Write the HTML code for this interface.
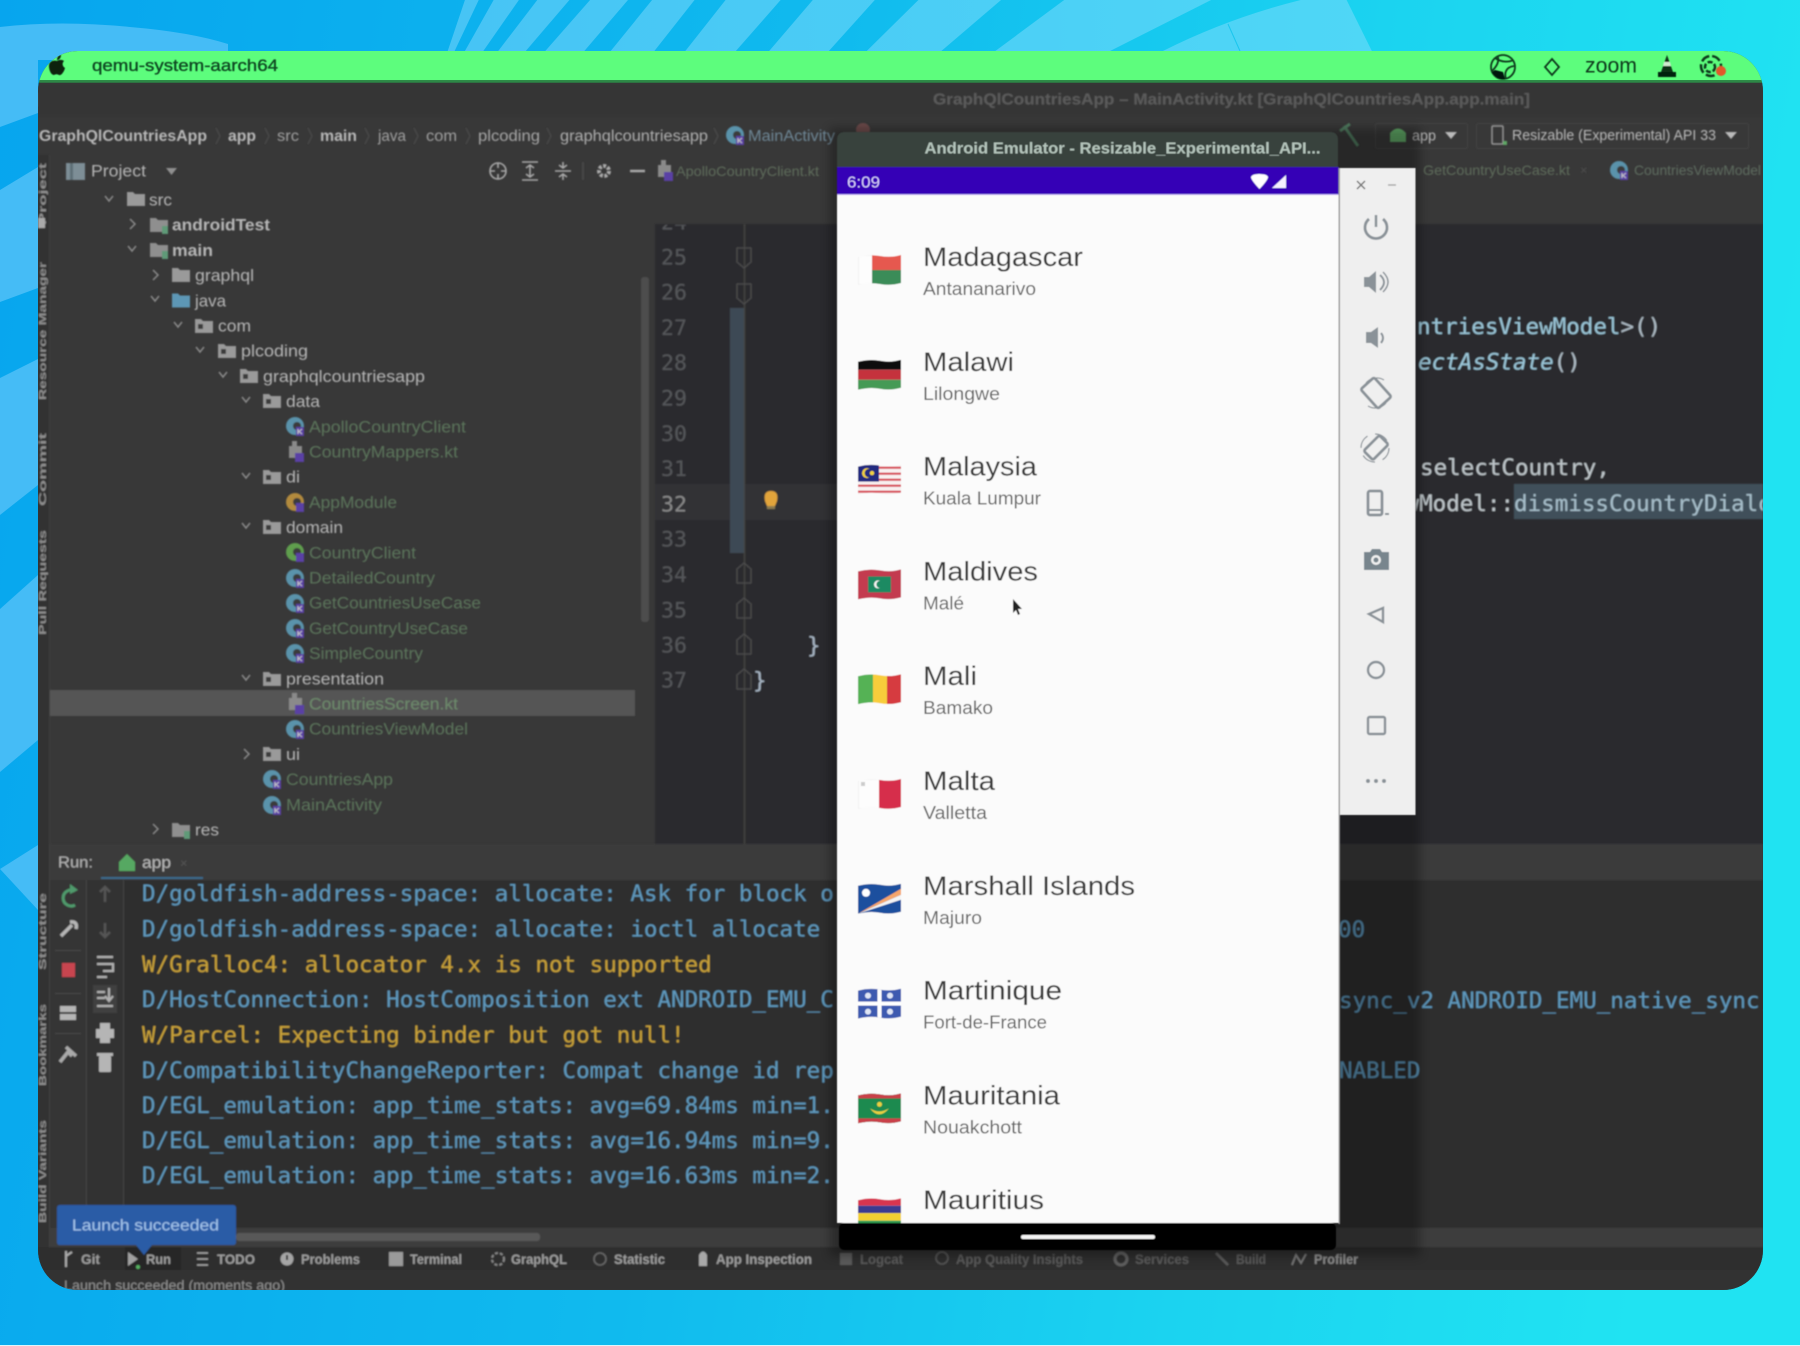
<!DOCTYPE html>
<html lang="en">
<head>
<meta charset="utf-8">
<title>Android Emulator in Android Studio</title>
<style>
html,body{margin:0;padding:0;width:1800px;height:1346px;overflow:hidden;background:#12c4ef}
svg{display:block}
text{font-family:"Liberation Sans",sans-serif;dominant-baseline:central;translate:0 .8px}
.m text,text.m{font-family:"DejaVu Sans Mono","Liberation Mono",monospace}
.a text,.nt text,text.nt{translate:none}
</style>
</head>
<body>
<svg xmlns="http://www.w3.org/2000/svg" width="1800" height="1346" viewBox="0 0 1800 1346">
<defs>
<linearGradient id="bg" x1="0" y1="0" x2="1800" y2="300" gradientUnits="userSpaceOnUse">
<stop offset="0" stop-color="#07a5ee"/><stop offset=".45" stop-color="#10baee"/><stop offset=".75" stop-color="#1bd3f0"/><stop offset="1" stop-color="#20e3f2"/>
</linearGradient>
<linearGradient id="st" x1="400" y1="0" x2="1400" y2="0" gradientUnits="userSpaceOnUse">
<stop offset="0" stop-color="#47c4f5"/><stop offset="1" stop-color="#51dcf6"/>
</linearGradient>
<clipPath id="win"><rect x="38" y="51" width="1725" height="1239" rx="40" ry="40"/></clipPath>
<clipPath id="app"><rect x="837" y="195" width="502" height="1028"/></clipPath>
<clipPath id="cod"><rect x="1416" y="224" width="347" height="620"/></clipPath>
<clipPath id="gut"><rect x="655" y="224" width="100" height="40"/></clipPath>
<clipPath id="fl"><path d="M0,2 Q11,-1 22,1 T43,0 V28 Q32,31 22,29 T0,30 Z"/></clipPath>
<filter id="b" x="-5%" y="-5%" width="110%" height="110%"><feGaussianBlur stdDeviation="0.85"/></filter>
<filter id="b2" x="-5%" y="-5%" width="110%" height="110%"><feGaussianBlur stdDeviation="0.6"/></filter>
<filter id="sh" x="-10%" y="-10%" width="120%" height="120%"><feGaussianBlur stdDeviation="5"/></filter>
<g id="f"><path d="M0,-7 H6 L8,-5 H18 V7 H0 Z" fill="#9a9a9a"/></g>
<g id="fp"><path d="M0,-7 H6 L8,-5 H18 V7 H0 Z" fill="#9a9a9a"/><rect x="3" y="-2" width="5" height="5" fill="#3a3a3a"/></g>
<g id="fs"><path d="M0,-7 H6 L8,-5 H18 V7 H0 Z" fill="#8f8f8f"/><rect x="12" y="1" width="6" height="8" fill="#5f9a78"/></g>
<path id="co" d="M-4,-3 L0,2 L4,-3" fill="none" stroke="#8b8b8b" stroke-width="1.5"/>
<path id="cc" d="M-2,-5 L3,0 L-2,5" fill="none" stroke="#8b8b8b" stroke-width="1.5"/>
<g id="k"><circle cx="9" cy="0" r="9" fill="#5a93ab"/><circle cx="11" cy="0" r="4" fill="#3a3a3a"/><rect x="10" y="1" width="8" height="9" fill="#5a3fa5"/><path d="M12,3 V8 M16,3 L13,5.5 L16,8" stroke="#ccc" stroke-width="1" fill="none"/></g>
<g id="kg"><circle cx="9" cy="0" r="9" fill="#5f9e4e"/><circle cx="11" cy="0" r="4" fill="#3a3a3a"/><rect x="10" y="1" width="8" height="9" fill="#5a3fa5"/></g>
<g id="ko"><circle cx="9" cy="0" r="9" fill="#b28a3e"/><circle cx="11" cy="0" r="4" fill="#3a3a3a"/><rect x="10" y="1" width="8" height="9" fill="#5a3fa5"/></g>
<g id="kf"><rect x="3" y="-6" width="13" height="12" fill="#8a8a8a"/><rect x="6" y="-11" width="5" height="6" fill="#8a8a8a"/><rect x="9" y="1" width="9" height="9" fill="#5a3fa5"/></g>
</defs>

<!-- background -->
<rect width="1800" height="1346" fill="url(#bg)"/>
<g fill="url(#st)">
<g transform="scale(1.148 1)">
<polygon points="405,0 417,0 396,51 390,51"/>
<polygon points="430,0 452,0 421,51 405,51"/>
<polygon points="468,0 496,0 458,51 434,51"/>
<polygon points="514,0 547,0 509,51 475,51"/>
<polygon points="568,0 605,0 570,51 532,51"/>
<polygon points="632,0 680,0 641,51 597,51"/>
<polygon points="708,0 762,0 722,51 670,51"/>
<polygon points="800,0 872,0 820,51 755,51"/>
<polygon points="927,0 1055,0 967,51 867,51"/>
<path d="M1133,0 H1173 L1195,51 H1013 Q1070,18 1133,0 Z"/>
</g>
</g>
<path d="M1228,24 L1240,51" stroke="#1ac6ee" stroke-width="1" fill="none"/>
<g fill="#45bcf6">
<path d="M0,27 Q60,20 130,27 Q190,32 228,44 V60 H38 V113 L0,127 Z"/>
<polygon points="0,190 38,167 38,288 0,302"/>
<polygon points="0,378 38,359 38,485 0,515"/>
<polygon points="0,609 38,575 38,740 0,772"/>
<polygon points="0,869 38,845 38,910"/>
</g>
<rect y="1345" width="1800" height="1" fill="#dff6fb"/>

<!-- window -->
<g clip-path="url(#win)">
<rect x="38" y="51" width="1725" height="1239" fill="#383838"/>
<rect x="38" y="51" width="1725" height="31" fill="#5dfd7d"/>
<rect x="38" y="80" width="1725" height="3" fill="#2e8a48"/>

<g filter="url(#b2)">
<!-- menubar -->
<path d="M57,61 C60,59 63,60 64,61 C62,63 62,66 65,68 C64,72 61,76 59,75 C57,74 56,74 54,75 C51,75 49,70 49,66 C49,61 54,60 57,61 Z M57,60 C57,57 59,55 61,55 C61,58 59,60 57,60 Z" fill="#07200f"/>
<text x="92" y="65" font-size="16.5" fill="#0c4a22" stroke="#0c4a22" stroke-width=".35" textLength="186" lengthAdjust="spacingAndGlyphs">qemu-system-aarch64</text>
<g fill="none" stroke="#0b3a1c" stroke-width="1.8">
<circle cx="1503" cy="67" r="12"/>
<path d="M1495,58 C1502,63 1510,62 1513,60 M1492,71 C1497,66 1499,62 1498,57 M1506,79 C1504,73 1506,67 1514,66"/>
<path d="M1552,59 L1559,67 L1552,75 L1545,67 Z"/>
</g>
<path d="M1495,70 L1503,72 L1505,79 C1499,80 1494,76 1492,72 Z" fill="#04170a"/>
<path d="M1552,62 L1556,67 L1552,72 L1548,67 Z" fill="#5dfd7d"/>
<text x="1585" y="65" font-size="21" fill="#0b3a1c" textLength="52" lengthAdjust="spacingAndGlyphs">zoom</text>
<path d="M1667,55 L1673,72 H1661 Z" fill="#0a3018"/><path d="M1664,62 H1670 L1671,66 H1663 Z" fill="#cfe9cf"/><rect x="1658" y="72" width="18" height="5" fill="#062010"/>
<circle cx="1711" cy="66" r="10" fill="none" stroke="#0b3a1c" stroke-width="2.5" stroke-dasharray="9 3"/>
<circle cx="1710" cy="67" r="5" fill="none" stroke="#0b3a1c" stroke-width="2.5" stroke-dasharray="5 2"/>
<circle cx="1721" cy="71" r="5" fill="#e2592b"/>

<!-- IDE title -->
<circle cx="40" cy="100" r="7" fill="#4c4c4c"/><circle cx="66" cy="100" r="7" fill="#4c4c4c"/><circle cx="92" cy="100" r="7" fill="#4c4c4c"/>
</g>

<g filter="url(#b)">
<rect x="38" y="83" width="1725" height="33" fill="#363636"/>
<text class="nt" x="933" y="100" font-size="16" font-weight="bold" fill="#5c5c5c" textLength="597" lengthAdjust="spacingAndGlyphs">GraphQlCountriesApp – MainActivity.kt [GraphQlCountriesApp.app.main]</text>

<!-- breadcrumbs -->
<g font-size="15.5" fill="#b9b9b9">
<text x="39" y="135.5" font-weight="bold" textLength="168" lengthAdjust="spacingAndGlyphs">GraphQlCountriesApp</text>
<text x="228" y="135.5" font-weight="bold" textLength="28" lengthAdjust="spacingAndGlyphs">app</text>
<text x="277" y="135.5" fill="#a0a0a0" textLength="22" lengthAdjust="spacingAndGlyphs">src</text>
<text x="320" y="135.5" font-weight="bold" textLength="37" lengthAdjust="spacingAndGlyphs">main</text>
<text x="378" y="135.5" fill="#a0a0a0" textLength="28" lengthAdjust="spacingAndGlyphs">java</text>
<text x="426" y="135.5" fill="#a0a0a0" textLength="31" lengthAdjust="spacingAndGlyphs">com</text>
<text x="478" y="135.5" fill="#a8a8a8" textLength="62" lengthAdjust="spacingAndGlyphs">plcoding</text>
<text x="560" y="135.5" fill="#b0b0b0" textLength="148" lengthAdjust="spacingAndGlyphs">graphqlcountriesapp</text>
<text x="748" y="135.5" fill="#6e8796" textLength="87" lengthAdjust="spacingAndGlyphs">MainActivity</text>
</g>
<g fill="none" stroke="#4c4c4c" stroke-width="1.2">
<path d="M216,128 L220,136 L216,144 M265,128 L269,136 L265,144 M308,128 L312,136 L308,144 M365,128 L369,136 L365,144 M414,128 L418,136 L414,144 M466,128 L470,136 L466,144 M547,128 L551,136 L547,144 M714,128 L718,136 L714,144"/>
</g>
<use href="#k" x="726" y="135"/>
<circle cx="863" cy="130" r="7" fill="#6b4a4a"/>
<!-- run config -->
<path d="M1344,126 L1358,146 M1340,131 L1350,124" stroke="#4f7a5f" stroke-width="3" fill="none"/>
<rect x="1375.5" y="123.5" width="92" height="25" fill="none" stroke="#444" rx="2"/>
<rect x="1476.5" y="123.5" width="272" height="25" fill="none" stroke="#444" rx="2"/>
<path d="M1390,142 V133 Q1398,124 1406,133 V142 Z" fill="#5fa765"/>
<text x="1412" y="135" font-size="15" fill="#bbb" textLength="24" lengthAdjust="spacingAndGlyphs">app</text>
<path d="M1445,132 H1457 L1451,139 Z" fill="#bbb"/>
<rect x="1492" y="126" width="11" height="18" fill="none" stroke="#999" stroke-width="1.5" rx="1"/>
<rect x="1503" y="141" width="4" height="4" fill="#5fa765"/>
<text x="1512" y="135" font-size="14.5" fill="#bbb" textLength="204" lengthAdjust="spacingAndGlyphs">Resizable (Experimental) API 33</text>
<path d="M1725,132 H1737 L1731,139 Z" fill="#bbb"/>

<!-- project toolbar -->
<rect x="66" y="163" width="19" height="17" fill="#7d8e96"/>
<rect x="70" y="163" width="3" height="17" fill="#5d6e76"/>
<text class="nt" x="91" y="171.5" font-size="16.5" fill="#b8b8b8" textLength="55" lengthAdjust="spacingAndGlyphs">Project</text>
<path d="M166,168 H177 L171.5,175 Z" fill="#909090"/>
<g fill="none" stroke="#aaa" stroke-width="1.6">
<circle cx="498" cy="171" r="8"/><path d="M498,163 V168 M498,174 V179 M490,171 H495 M501,171 H506"/>
<path d="M522,162 H538 M522,180 H538 M530,165 V177 M526,168 L530,165 L534,168 M526,174 L530,177 L534,174"/>
<path d="M555,171 H571 M563,162 V168 M563,174 V180 M559,165 L563,168 L567,165 M559,177 L563,174 L567,177"/>
<path d="M583,162 V180" stroke="#4a4a4a"/>
<circle cx="604" cy="171" r="5" stroke-width="4" stroke-dasharray="3 1.5"/>
<path d="M630,171 H645" stroke-width="2.5"/>
</g>
<use href="#kf" x="655" y="171"/>
<g class="nt">
<text x="676" y="171" font-size="14" fill="#5f6d5c" textLength="143" lengthAdjust="spacingAndGlyphs">ApolloCountryClient.kt</text>
<text x="1423" y="170" font-size="14" fill="#5f6d5c" textLength="147" lengthAdjust="spacingAndGlyphs">GetCountryUseCase.kt</text>
<text x="1580" y="170" font-size="13" fill="#4e4e4e">×</text>
<text x="1634" y="170" font-size="14" fill="#5f6d60" textLength="127" lengthAdjust="spacingAndGlyphs">CountriesViewModel</text>
</g>
<use href="#k" x="1610" y="170"/>

<!-- left tool strip -->
<rect x="38" y="155" width="11" height="1135" fill="#333"/>
<rect x="49" y="155" width="1" height="1105" fill="#414141"/>
<g font-size="10.5" fill="#8e8e8e" font-weight="bold" class="nt">
<text transform="translate(43,225) rotate(-90)" textLength="62" lengthAdjust="spacingAndGlyphs">Project</text>
<text transform="translate(43,400) rotate(-90)" textLength="138" lengthAdjust="spacingAndGlyphs">Resource Manager</text>
<text transform="translate(43,506) rotate(-90)" textLength="73" lengthAdjust="spacingAndGlyphs">Commit</text>
<text transform="translate(43,635) rotate(-90)" textLength="105" lengthAdjust="spacingAndGlyphs">Pull Requests</text>
<text transform="translate(43,970) rotate(-90)" textLength="77" lengthAdjust="spacingAndGlyphs">Structure</text>
<text transform="translate(43,1086) rotate(-90)" textLength="82" lengthAdjust="spacingAndGlyphs">Bookmarks</text>
<text transform="translate(43,1223) rotate(-90)" textLength="103" lengthAdjust="spacingAndGlyphs">Build Variants</text>
</g>
<rect x="38" y="218" width="7" height="10" fill="#aaa"/>

<!-- project tree -->
<rect x="50" y="690" width="585" height="26" fill="#555"/>
<rect x="641" y="277" width="8" height="345" fill="#4d4d4d" rx="3"/>

<use href="#co" x="109" y="199"/><use href="#f" x="127" y="199"/>
<use href="#cc" x="132" y="224"/><use href="#fs" x="150" y="225"/>
<use href="#co" x="132" y="249"/><use href="#fs" x="150" y="250"/>
<use href="#cc" x="155" y="275"/><use href="#f" x="172" y="275"/>
<use href="#co" x="155" y="299"/><path d="M172,293.5 H178 L180,295.5 H190 V307.5 H172 Z" fill="#5d97b5"/>
<use href="#co" x="178" y="325"/><use href="#fp" x="195" y="326"/>
<use href="#co" x="200" y="350"/><use href="#fp" x="218" y="351"/>
<use href="#co" x="223" y="375"/><use href="#fp" x="240" y="376"/>
<use href="#co" x="246" y="400"/><use href="#fp" x="263" y="401"/>
<use href="#k" x="286" y="426"/>
<use href="#kf" x="286" y="452"/>
<use href="#co" x="246" y="476"/><use href="#fp" x="263" y="477"/>
<use href="#ko" x="286" y="502"/>
<use href="#co" x="246" y="526"/><use href="#fp" x="263" y="527"/>
<use href="#kg" x="286" y="552"/>
<use href="#k" x="286" y="578"/><use href="#k" x="286" y="603"/><use href="#k" x="286" y="628"/><use href="#k" x="286" y="653"/>
<use href="#co" x="246" y="678"/><use href="#fp" x="263" y="679"/>
<use href="#kf" x="286" y="704"/>
<use href="#k" x="286" y="729"/>
<use href="#cc" x="246" y="754"/><use href="#fp" x="263" y="754"/>
<use href="#k" x="263" y="779"/><use href="#k" x="263" y="805"/>
<use href="#cc" x="155" y="829"/><use href="#fs" x="172" y="830"/>

<g font-size="16.5" fill="#b8b8b8">
<text x="149" y="199.7" textLength="23" lengthAdjust="spacingAndGlyphs">src</text>
<text x="172" y="224.9" font-weight="bold" textLength="98" lengthAdjust="spacingAndGlyphs">androidTest</text>
<text x="172" y="250.1" font-weight="bold" textLength="41" lengthAdjust="spacingAndGlyphs">main</text>
<text x="195" y="275.3" textLength="59" lengthAdjust="spacingAndGlyphs">graphql</text>
<text x="195" y="300.5" textLength="31" lengthAdjust="spacingAndGlyphs">java</text>
<text x="218" y="325.7" textLength="33" lengthAdjust="spacingAndGlyphs">com</text>
<text x="241" y="350.9" textLength="67" lengthAdjust="spacingAndGlyphs">plcoding</text>
<text x="263" y="376.1" textLength="162" lengthAdjust="spacingAndGlyphs">graphqlcountriesapp</text>
<text x="286" y="401.3" textLength="34" lengthAdjust="spacingAndGlyphs">data</text>
<text x="286" y="476.9" textLength="14" lengthAdjust="spacingAndGlyphs">di</text>
<text x="286" y="527.3" textLength="57" lengthAdjust="spacingAndGlyphs">domain</text>
<text x="286" y="678.5" textLength="98" lengthAdjust="spacingAndGlyphs">presentation</text>
<text x="286" y="754.1" textLength="14" lengthAdjust="spacingAndGlyphs">ui</text>
<text x="195" y="829.7" textLength="24" lengthAdjust="spacingAndGlyphs">res</text>
</g>
<g font-size="16.5" fill="#5c765b">
<text x="309" y="426.5" textLength="157" lengthAdjust="spacingAndGlyphs">ApolloCountryClient</text>
<text x="309" y="451.7" textLength="149" lengthAdjust="spacingAndGlyphs">CountryMappers.kt</text>
<text x="309" y="502.1" textLength="88" lengthAdjust="spacingAndGlyphs">AppModule</text>
<text x="309" y="552.5" textLength="107" lengthAdjust="spacingAndGlyphs">CountryClient</text>
<text x="309" y="577.7" textLength="126" lengthAdjust="spacingAndGlyphs">DetailedCountry</text>
<text x="309" y="602.9" textLength="172" lengthAdjust="spacingAndGlyphs">GetCountriesUseCase</text>
<text x="309" y="628.1" textLength="159" lengthAdjust="spacingAndGlyphs">GetCountryUseCase</text>
<text x="309" y="653.3" textLength="114" lengthAdjust="spacingAndGlyphs">SimpleCountry</text>
<text x="309" y="703.7" textLength="149" lengthAdjust="spacingAndGlyphs" fill="#6d8a6c">CountriesScreen.kt</text>
<text x="309" y="728.9" textLength="159" lengthAdjust="spacingAndGlyphs">CountriesViewModel</text>
<text x="286" y="779.3" textLength="107" lengthAdjust="spacingAndGlyphs">CountriesApp</text>
<text x="286" y="804.5" textLength="96" lengthAdjust="spacingAndGlyphs">MainActivity</text>
</g>

<!-- editor -->
<rect x="655" y="224" width="1108" height="620" fill="#2b2b2e"/>
<rect x="655" y="484" width="200" height="36" fill="#303236"/>
<rect x="730" y="308" width="15" height="245" fill="#3e4a54"/>
<path d="M744.5,224 V844" stroke="#454545" stroke-width="1.2"/>
<g fill="none" stroke="#4c4c4c" stroke-width="1.3">
<path d="M737,248 H751 V262 L744,268 L737,262 Z"/><path d="M737,284 H751 V298 L744,304 L737,298 Z"/>
<path d="M744,563 L751,569 V583 H737 V569 Z"/><path d="M744,598 L751,604 V618 H737 V604 Z"/>
<path d="M744,634 L751,640 V654 H737 V640 Z"/><path d="M744,669 L751,675 V689 H737 V675 Z"/>
</g>
<g class="m" font-size="21.5" fill="#55575a">
<text x="661" y="222" clip-path="url(#gut)">24</text>
<text x="661" y="257">25</text><text x="661" y="292.3">26</text><text x="661" y="327.6">27</text><text x="661" y="362.9">28</text><text x="661" y="398.2">29</text><text x="661" y="433.5">30</text><text x="661" y="468.8">31</text>
<text x="661" y="504.1" fill="#8a8a8a">32</text>
<text x="661" y="539.4">33</text><text x="661" y="574.7">34</text><text x="661" y="610">35</text><text x="661" y="645.3">36</text><text x="661" y="680">37</text>
</g>
<path d="M771,491 Q779,491 777,501 L775,506 H767 L765,501 Q763,491 771,491 Z" fill="#e2a43a"/>
<rect x="767" y="506" width="8" height="3" fill="#8a7a50"/>
<g class="m" font-size="22.54" fill="#a9b7c6">
<text x="807" y="645">}</text><text x="753" y="680">}</text>
<g clip-path="url(#cod)">
<rect x="1514" y="484" width="249" height="35" fill="#41505a"/>
<text x="1417" y="326"><tspan fill="#9cc8da">ntriesViewModel</tspan><tspan fill="#b0bec8">&gt;()</tspan></text>
<text x="1418" y="361.5" font-style="italic" fill="#9cc8da">ectAsState<tspan font-style="normal" fill="#b0bec8">()</tspan></text>
<text x="1420" y="467" fill="#c0c8cc">selectCountry,</text>
<text x="1405.5" y="503" fill="#c0c8cc">wModel::<tspan fill="#a8c0cc">dismissCountryDialog</tspan></text>
</g>
</g>

<!-- run panel -->
<rect x="50" y="844" width="1713" height="36" fill="#3a3a3a"/>
<g class="nt">
<text x="58" y="863" font-size="16" fill="#b5b5b5" textLength="35" lengthAdjust="spacingAndGlyphs">Run:</text>
<text x="142" y="863" font-size="16.5" fill="#bbb" textLength="29" lengthAdjust="spacingAndGlyphs">app</text>
<text x="180" y="863" font-size="13" fill="#555">×</text>
</g>
<path d="M119,871 V862 L127,854 L135,862 V871 Z" fill="#56a862"/>
<rect x="101" y="877" width="102" height="2" fill="#3a6a8c"/>
<rect x="50" y="880" width="1713" height="348" fill="#2d2d2e"/>
<rect x="50" y="880" width="36" height="348" fill="#343434"/>
<rect x="86" y="880" width="1" height="348" fill="#444"/>
<rect x="87" y="880" width="36" height="348" fill="#333"/>
<rect x="123" y="880" width="1" height="348" fill="#444"/>
<g class="m" font-size="22.54" fill="#5f99bd">
<text x="142" y="893">D/goldfish-address-space: allocate: Ask for block o</text>
<text x="142" y="928.5">D/goldfish-address-space: allocate: ioctl allocate</text>
<text x="142" y="964" fill="#c9a238">W/Gralloc4: allocator 4.x is not supported</text>
<text x="142" y="999">D/HostConnection: HostComposition ext ANDROID_EMU_C</text>
<text x="142" y="1034.5" fill="#c9a238">W/Parcel: Expecting binder but got null!</text>
<text x="142" y="1070">D/CompatibilityChangeReporter: Compat change id rep</text>
<text x="142" y="1105">D/EGL_emulation: app_time_stats: avg=69.84ms min=1.</text>
<text x="142" y="1140">D/EGL_emulation: app_time_stats: avg=16.94ms min=9.</text>
<text x="142" y="1175">D/EGL_emulation: app_time_stats: avg=16.63ms min=2.</text>
<text x="1338" y="929">00</text>
<text x="1339" y="1000">sync_v2 ANDROID_EMU_native_sync,</text>
<text x="1339" y="1070">NABLED</text>
</g>
<!-- run toolbar icons -->
<path d="M75,891 A8,8 0 1 0 75,905" fill="none" stroke="#4f9a6c" stroke-width="3"/><path d="M70,884 L78,890 L70,894 Z" fill="#4f9a6c"/>
<path d="M61,936 L72,925 M70,922 Q78,921 76,929" stroke="#b5b5b5" stroke-width="3.5" fill="none"/>
<rect x="62" y="963" width="13" height="14" fill="#c8444f"/>
<rect x="55" y="950" width="26" height="1" fill="#4a4a4a"/><rect x="55" y="993" width="26" height="1" fill="#4a4a4a"/><rect x="55" y="1033" width="26" height="1" fill="#4a4a4a"/>
<rect x="60" y="1006" width="16" height="6" fill="#b5b5b5"/><rect x="60" y="1014" width="16" height="6" fill="#b5b5b5"/>
<path d="M60,1062 L68,1052 L72,1056 M66,1047 L76,1056" stroke="#aaa" stroke-width="3.5" fill="none"/>
<path d="M105,888 V902 M100,892 L105,887 L110,892" stroke="#555" stroke-width="2.5" fill="none"/>
<path d="M105,923 V936 M100,932 L105,937 L110,932" stroke="#555" stroke-width="2.5" fill="none"/>
<path d="M97,957 H113 M97,964 H113 V971 H103 M97,977 H107" stroke="#b0b0b0" stroke-width="2.2" fill="none"/>
<rect x="93" y="985" width="24" height="28" fill="#3f3f3f"/>
<path d="M97,992 H105 M97,998 H105 M97,1006 H113 M109,988 V1000 M105,996 L109,1001 L113,996" stroke="#b0b0b0" stroke-width="2.2" fill="none"/>
<rect x="100" y="1023" width="10" height="6" fill="#b5b5b5"/><rect x="96" y="1029" width="18" height="9" fill="#b5b5b5"/><rect x="100" y="1038" width="10" height="5" fill="#b5b5b5"/>
<rect x="99" y="1056" width="12" height="16" fill="#b5b5b5" rx="1"/><rect x="97" y="1053" width="16" height="3" fill="#b5b5b5"/>

<!-- horizontal scrollbar + bottom bars -->
<rect x="50" y="1228" width="1713" height="19" fill="#3d3d3d"/>
<rect x="236" y="1233" width="304" height="8" fill="#585858" rx="3"/>
<rect x="38" y="1247" width="1725" height="23" fill="#2f2f2f"/>
<rect x="38" y="1270" width="1725" height="20" fill="#333"/>
<rect x="125" y="1247" width="56" height="23" fill="#272727"/>
<g font-size="14" fill="#9e9e9e" class="nt">
<text x="81" y="1259" textLength="19" lengthAdjust="spacingAndGlyphs" font-weight="bold">Git</text>
<text x="146" y="1259" textLength="25" lengthAdjust="spacingAndGlyphs" font-weight="bold">Run</text>
<text x="217" y="1259" textLength="38" lengthAdjust="spacingAndGlyphs" font-weight="bold">TODO</text>
<text x="301" y="1259" textLength="59" lengthAdjust="spacingAndGlyphs" font-weight="bold">Problems</text>
<text x="410" y="1259" textLength="52" lengthAdjust="spacingAndGlyphs" font-weight="bold">Terminal</text>
<text x="511" y="1259" textLength="56" lengthAdjust="spacingAndGlyphs" font-weight="bold">GraphQL</text>
<text x="614" y="1259" textLength="51" lengthAdjust="spacingAndGlyphs" font-weight="bold">Statistic</text>
<text x="716" y="1259" textLength="96" lengthAdjust="spacingAndGlyphs" font-weight="bold">App Inspection</text>
<g fill="#5a5a5a" font-weight="bold">
<text x="860" y="1259" textLength="43" lengthAdjust="spacingAndGlyphs">Logcat</text>
<text x="956" y="1259" textLength="127" lengthAdjust="spacingAndGlyphs">App Quality Insights</text>
<text x="1135" y="1259" textLength="54" lengthAdjust="spacingAndGlyphs">Services</text>
<text x="1236" y="1259" textLength="30" lengthAdjust="spacingAndGlyphs">Build</text>
</g>
<text x="1314" y="1259" textLength="44" lengthAdjust="spacingAndGlyphs" fill="#8e8e8e" font-weight="bold">Profiler</text>
<text x="64" y="1285" font-size="14" fill="#8f8f8f" textLength="221" lengthAdjust="spacingAndGlyphs">Launch succeeded (moments ago)</text>
</g>
<path d="M66,1251 V1267 M66,1256 L72,1252" stroke="#aaa" stroke-width="2" fill="none"/>
<path d="M128,1252 L138,1259 L128,1266 Z" fill="#a0a0a0"/><circle cx="138" cy="1267" r="2" fill="#55b060"/>
<path d="M197,1253 H208 M197,1259 H208 M197,1265 H208" stroke="#aaa" stroke-width="1.6"/>
<circle cx="287" cy="1259" r="6.5" fill="#a5a5a5"/><rect x="286" y="1255" width="2" height="5" fill="#333"/>
<rect x="389" y="1252" width="14" height="14" fill="#9a9a9a"/>
<circle cx="498" cy="1259" r="6" fill="none" stroke="#888" stroke-width="2" stroke-dasharray="3 2"/>
<circle cx="600" cy="1259" r="6" fill="none" stroke="#666" stroke-width="1.6"/>
<path d="M699,1266 V1255 Q703,1248 707,1255 V1266 Z" fill="#a8a8a8"/>
<rect x="840" y="1253" width="12" height="12" fill="#5a5a5a"/>
<circle cx="942" cy="1258" r="6" fill="none" stroke="#555" stroke-width="1.6"/>
<circle cx="1121" cy="1259" r="6" fill="none" stroke="#5e5e5e" stroke-width="3"/>
<path d="M1216,1253 L1228,1265" stroke="#5a5a5a" stroke-width="2.5"/>
<path d="M1292,1265 L1296,1255 L1301,1263 L1306,1254" fill="none" stroke="#777" stroke-width="1.8"/>

<!-- tooltip -->
<path d="M60,1205 H233 Q236,1205 236,1208 V1242 Q236,1245 233,1245 H152 L144,1255 L136,1245 H60 Q57,1245 57,1242 V1208 Q57,1205 60,1205 Z" fill="#2a5ca6"/>
<text x="72" y="1225" font-size="16" fill="#a6c8ee" textLength="147" lengthAdjust="spacingAndGlyphs">Launch succeeded</text>
</g>

<!-- emulator -->
<rect x="830" y="128" width="590" height="1128" fill="#000" opacity=".3" filter="url(#sh)"/>
<g filter="url(#b2)">
<path d="M837,140 Q837,132 845,132 H1330 Q1338,132 1338,140 V168 H837 Z" fill="#37423d"/>
<text x="924.5" y="148" font-size="15.5" font-weight="bold" fill="#b4c4bb" textLength="396" lengthAdjust="spacingAndGlyphs">Android Emulator - Resizable_Experimental_API...</text>
<rect x="837" y="167" width="502" height="27" fill="#3400b6"/>
<rect x="837" y="194" width="502" height="1.5" fill="#b8a0f0"/>
<text x="847" y="182" font-size="16" fill="#d9cdfa" textLength="33" lengthAdjust="spacingAndGlyphs">6:09</text>
<path d="M1251,177 Q1252,174 1259,174 Q1267,174 1268,177 Q1268,180 1259.5,189 Q1251,180 1251,177 Z" fill="#fff"/>
<path d="M1286,175 V188 H1272 Z" fill="#f4f0ff"/>
<rect x="837" y="195" width="502" height="1028" fill="#fbfbfb"/>
<rect x="1338.5" y="168" width="1.5" height="1056" fill="#9a9a9a"/>
<rect x="839" y="1223" width="497" height="27" fill="#000" rx="5"/>
<rect x="1021" y="1235" width="134" height="4" rx="2" fill="#f4f4f4"/>

<rect x="1340" y="168" width="75.5" height="647" fill="#efefef"/>
<g fill="none" stroke="#8a9298" stroke-width="2.5">
<path d="M1357,181 L1365,189 M1365,181 L1357,189" stroke-width="1.5" stroke="#777"/>
<path d="M1388,185 H1396" stroke-width="1.5" stroke="#aaa"/>
<path d="M1376,215 V227"/><path d="M1369,219 A11,11 0 1 0 1383,219" stroke-width="2.8"/>
<path d="M1364,277 H1369 L1376,271 V293 L1369,287 H1364 Z" fill="#8a9298" stroke="none"/>
<path d="M1380,275 Q1388,282 1380,290" stroke-width="2"/><path d="M1383,272 Q1393,282 1383,292" stroke-width="1.5"/>
<path d="M1366,332 H1371 L1378,327 V348 L1371,343 H1366 Z" fill="#8a9298" stroke="none"/>
<path d="M1381,333 Q1385,338 1381,343" stroke-width="2"/>
<rect x="1367" y="380" width="18" height="26" rx="2" transform="rotate(-42 1376 393)" stroke-width="2.8"/>
<path d="M1366,383 A14,14 0 0 1 1384,380 M1386,403 A14,14 0 0 1 1368,406" stroke-width="1.2"/>
<rect x="1365" y="442" width="22" height="13" rx="2" transform="rotate(-45 1375 448)" stroke-width="2.8"/>
<circle cx="1375" cy="448" r="14" stroke-width="1.2" stroke-dasharray="14 8"/>
<rect x="1368" y="491" width="14" height="24" rx="2" stroke-width="2.8"/>
<path d="M1368,510 H1382" stroke-width="2"/>
<path d="M1385,514 H1389" stroke-width="2"/>
<path d="M1383,608 L1369,614 L1383,622 Z" stroke-width="2.4"/>
<circle cx="1376" cy="670" r="8" stroke-width="2.4"/>
<rect x="1368" y="717" width="17" height="17" rx="1.5" stroke-width="2.4"/>
</g>
<path d="M1364,552 H1370 L1372,549 H1380 L1382,552 H1389 V570 H1364 Z" fill="#78858d"/><circle cx="1376" cy="560" r="5" fill="#efefef"/><circle cx="1376" cy="560" r="2.5" fill="#78858d"/>
<circle cx="1368" cy="781" r="2" fill="#8a9298"/><circle cx="1376" cy="781" r="2" fill="#8a9298"/><circle cx="1384" cy="781" r="2" fill="#8a9298"/>

<g clip-path="url(#app)" class="a">
<!-- Flags -->
<g transform="translate(858,255)"><g clip-path="url(#fl)"><rect width="14" height="30" fill="#f1f1f1"/><rect width="13" height="28" x="1" y="1" fill="#fdfdfd"/><rect x="14" width="29" height="15" fill="#e6584f"/><rect x="14" y="15" width="29" height="15" fill="#3a8c58"/></g></g>
<g transform="translate(858,359.8)"><g clip-path="url(#fl)"><rect width="43" height="10" fill="#111"/><rect y="10" width="43" height="10" fill="#c5303c"/><rect y="20" width="43" height="10" fill="#459a55"/></g></g>
<g transform="translate(858,464.6)"><g clip-path="url(#fl)"><rect width="43" height="30" fill="#f8f0f0"/><g fill="#d8555f"><rect y="2" width="43" height="2.2"/><rect y="8" width="43" height="2.2"/><rect y="14" width="43" height="2.2"/><rect y="20" width="43" height="2.2"/><rect y="26" width="43" height="2.2"/></g><rect width="21" height="17" fill="#232a80"/><circle cx="9" cy="8.5" r="5" fill="#f0d040"/><circle cx="11" cy="8.5" r="4.3" fill="#232a80"/><circle cx="14" cy="8.5" r="2.2" fill="#f0d040"/></g></g>
<g transform="translate(858,569.4)"><g clip-path="url(#fl)"><rect width="43" height="30" fill="#c33a50"/><rect x="10" y="7" width="23" height="16" fill="#1f8a62"/><circle cx="20" cy="15" r="4" fill="#f4f4f4"/><circle cx="22" cy="15" r="3.6" fill="#1f8a62"/></g></g>
<g transform="translate(858,674.2)"><g clip-path="url(#fl)"><rect width="15" height="30" fill="#55b255"/><rect x="15" width="14" height="30" fill="#f8cd3a"/><rect x="29" width="14" height="30" fill="#d63a40"/></g></g>
<g transform="translate(858,779)"><g clip-path="url(#fl)"><rect width="21" height="30" fill="#f1f1f1"/><rect x="1" y="1" width="20" height="28" fill="#fdfdfd"/><rect x="21" width="22" height="30" fill="#d62f4b"/><rect x="3" y="3" width="4" height="4" fill="#ccc"/></g></g>
<g transform="translate(858,883.8)"><g clip-path="url(#fl)"><rect width="43" height="30" fill="#1f509e"/><path d="M0,30 L43,5 V11 Z" fill="#f5a56a"/><path d="M0,30 L43,11 V16 Z" fill="#f4f4f4"/><circle cx="8" cy="9" r="4" fill="#fff"/></g></g>
<g transform="translate(858,988.6)"><g clip-path="url(#fl)"><rect width="43" height="30" fill="#3d5ab0"/><rect x="19.5" width="4" height="30" fill="#fff"/><rect y="13" width="43" height="4" fill="#fff"/><g fill="#dfe6f5"><circle cx="10" cy="7" r="3"/><circle cx="32" cy="7" r="3"/><circle cx="10" cy="23" r="3"/><circle cx="32" cy="23" r="3"/></g></g></g>
<g transform="translate(858,1093.4)"><g clip-path="url(#fl)"><rect width="43" height="30" fill="#1f8a50"/><rect width="43" height="5" fill="#c9404a"/><rect y="25" width="43" height="5" fill="#c9404a"/><path d="M12,15 Q21,27 31,15 Q21,21 12,15 Z" fill="#e8d040"/><circle cx="21.5" cy="11" r="2.5" fill="#e8d040"/></g></g>
<g transform="translate(858,1198.2)"><g clip-path="url(#fl)"><rect width="43" height="7.5" fill="#d8354f"/><rect y="7.5" width="43" height="7.5" fill="#3a3a90"/><rect y="15" width="43" height="7.5" fill="#f2d030"/><rect y="22.5" width="43" height="7.5" fill="#2f9a50"/></g></g>
<!-- names -->
<g font-size="27" fill="#3a3a3a">
<text x="923" y="257" textLength="160" lengthAdjust="spacingAndGlyphs">Madagascar</text>
<text x="923" y="361.8" textLength="91" lengthAdjust="spacingAndGlyphs">Malawi</text>
<text x="923" y="466.6" textLength="114" lengthAdjust="spacingAndGlyphs">Malaysia</text>
<text x="923" y="571.4" textLength="115" lengthAdjust="spacingAndGlyphs">Maldives</text>
<text x="923" y="676.2" textLength="54" lengthAdjust="spacingAndGlyphs">Mali</text>
<text x="923" y="781" textLength="72" lengthAdjust="spacingAndGlyphs">Malta</text>
<text x="923" y="885.8" textLength="212" lengthAdjust="spacingAndGlyphs">Marshall Islands</text>
<text x="923" y="990.6" textLength="139" lengthAdjust="spacingAndGlyphs">Martinique</text>
<text x="923" y="1095.4" textLength="137" lengthAdjust="spacingAndGlyphs">Mauritania</text>
<text x="923" y="1200.2" textLength="121" lengthAdjust="spacingAndGlyphs">Mauritius</text>
</g>
<g font-size="18" fill="#666">
<text x="923" y="289" textLength="113" lengthAdjust="spacingAndGlyphs">Antananarivo</text>
<text x="923" y="393.8" textLength="77" lengthAdjust="spacingAndGlyphs">Lilongwe</text>
<text x="923" y="498.6" textLength="118" lengthAdjust="spacingAndGlyphs">Kuala Lumpur</text>
<text x="923" y="603.4" textLength="41" lengthAdjust="spacingAndGlyphs">Malé</text>
<text x="923" y="708.2" textLength="70" lengthAdjust="spacingAndGlyphs">Bamako</text>
<text x="923" y="813" textLength="64" lengthAdjust="spacingAndGlyphs">Valletta</text>
<text x="923" y="917.8" textLength="59" lengthAdjust="spacingAndGlyphs">Majuro</text>
<text x="923" y="1022.6" textLength="124" lengthAdjust="spacingAndGlyphs">Fort-de-France</text>
<text x="923" y="1127.4" textLength="99" lengthAdjust="spacingAndGlyphs">Nouakchott</text>
</g>
<!-- cursor -->
<path d="M1013,599 V613 L1016,610 L1018,615 L1020,614 L1018,609 L1022,609 Z" fill="#222"/>
</g>
</g>
</g>
</svg>
</body>
</html>
